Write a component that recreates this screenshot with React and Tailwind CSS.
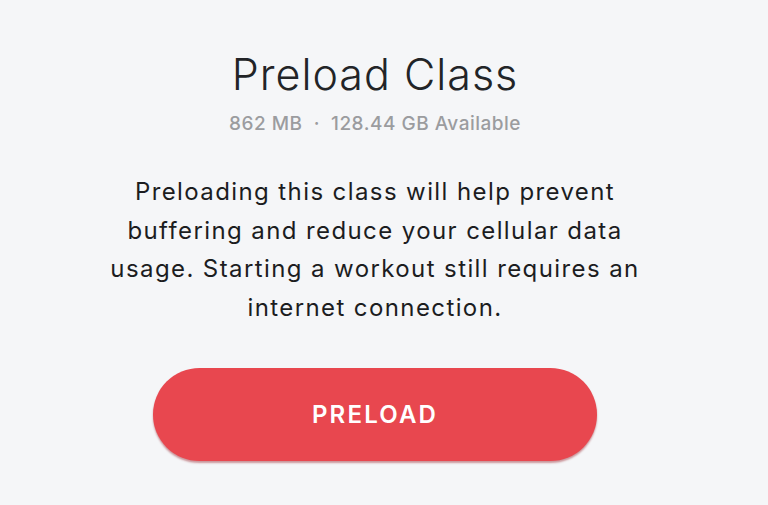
export default function App() {
  return (
    <div className="w-[768px] h-[505px] bg-[#f5f6f8] flex flex-col items-center overflow-hidden pr-[18px]" style={{ fontFamily: 'Inter, "Noto Sans", sans-serif' }}>
      <h1 className="mt-[46px] text-[43px] leading-[56px] font-light text-[#222427] tracking-[1px]">Preload Class</h1>
      <p className="mt-[10px] text-[19px] leading-[24px] font-medium text-[#9b9c9f] tracking-[0.5px]">862 MB&nbsp;&nbsp;·&nbsp;&nbsp;128.44 GB Available</p>
      <p className="mt-[37px] w-[545px] text-center text-[24px] leading-[38.5px] text-[#1c1d1f] tracking-[1.4px]">
        Preloading this class will help prevent buffering and reduce your cellular data usage. Starting a workout still requires an internet connection.
      </p>
      <button className="mt-[41px] w-[444px] h-[93px] shrink-0 rounded-full bg-[#e8474f] shadow-[0_2px_2px_rgba(150,30,40,0.45)] text-white text-[24px] font-semibold tracking-[2.2px]">
        PRELOAD
      </button>
    </div>
  );
}
